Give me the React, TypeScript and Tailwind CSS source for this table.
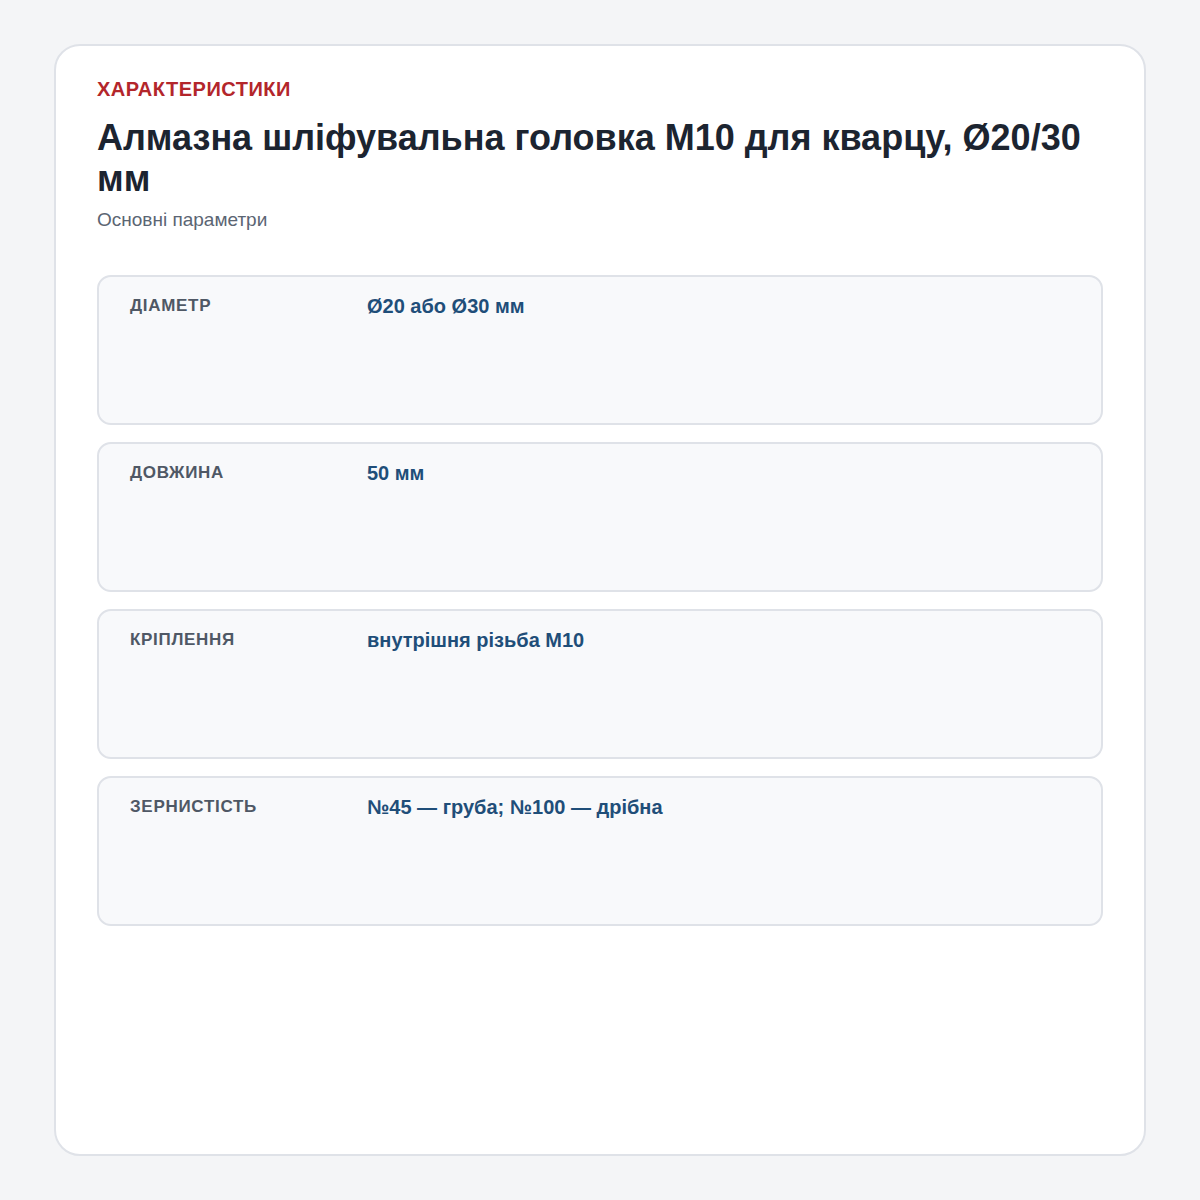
import React from 'react';

const specs = [
  { label: 'Діаметр', value: 'Ø20 або Ø30 мм' },
  { label: 'Довжина', value: '50 мм' },
  { label: 'Кріплення', value: 'внутрішня різьба M10' },
  { label: 'Зернистість', value: '№45 — груба; №100 — дрібна' },
];

const App = () => {
  return (
    <div className="min-h-screen bg-[#f4f5f7] px-[54px] pt-[44px] pb-[44px] font-['Liberation_Sans',Arial,sans-serif]">
      <div className="h-[1112px] rounded-[26px] border-2 border-[#dfe2e8] bg-white px-[41px] pt-[28px]">
        <div className="text-[20px] font-bold uppercase leading-[30px] tracking-[0.5px] text-[#b3262b]">
          Характеристики
        </div>
        <h1 className="mt-[13px] text-[36px] font-bold leading-[41px] text-[#1c2430]">
          Алмазна шліфувальна головка M10 для кварцу, Ø20/30 мм
        </h1>
        <p className="mt-[9px] text-[19px] leading-[24px] text-[#5b6573]">Основні параметри</p>

        <div className="mt-[43px] flex flex-col gap-[17px]">
          {specs.map((s) => (
            <div
              key={s.label}
              className="grid h-[150px] grid-cols-[237px_1fr] rounded-[14px] border-2 border-[#dfe2e8] bg-[#f8f9fb] px-[31px] pt-[17px]"
            >
              <div className="text-[17px] font-bold uppercase leading-[24px] tracking-[0.7px] text-[#4f5865]">
                {s.label}
              </div>
              <div className="text-[20px] font-bold leading-[24px] text-[#1f4e79]">{s.value}</div>
            </div>
          ))}
        </div>
      </div>
    </div>
  );
};

export default App;
